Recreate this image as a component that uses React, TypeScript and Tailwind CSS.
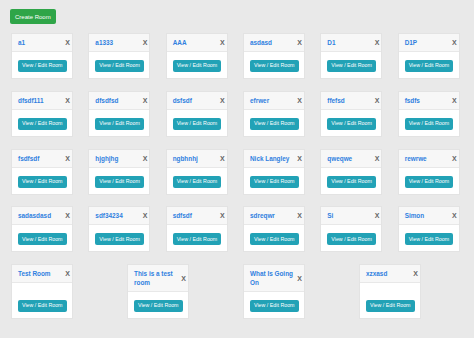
const rooms = [
  "a1", "a1333", "AAA", "asdasd", "D1", "D1P",
  "dfsdf111", "dfsdfsd", "dsfsdf", "efrwer", "ffefsd", "fsdfs",
  "fsdfsdf", "hjghjhg", "ngbhnhj", "Nick Langley", "qweqwe", "rewrwe",
  "sadasdasd", "sdf34234", "sdfsdf", "sdreqwr", "Si", "Simon",
  "Test Room", "This is a test room", "What Is Going On", "xzxasd",
];

function RoomCard({ name }: { name: string }) {
  return (
    <div className="ml-[8px] flex w-[62px] flex-col border border-[#e3e3e3] bg-white">
      <div className="flex items-center justify-between border-b border-[#e8e8e8] bg-[#f7f7f7] py-[4px] pl-[6px] pr-[2px]">
        <span className="text-[6.4px] font-bold leading-[9px] text-[#2f7fe0]">{name}</span>
        <span className="text-[7px] font-bold leading-[9px] text-[#666]">X</span>
      </div>
      <div className="flex flex-1 items-end px-[6px] pt-[8px] pb-[6px]">
        <button className="flex h-[12px] items-center whitespace-nowrap rounded-[2px] bg-[#22a2b6] px-[4px] text-[5.3px] leading-none text-white">
          View / Edit Room
        </button>
      </div>
    </div>
  );
}

export default function App() {
  return (
    <div className="min-h-screen bg-[#e9e9e9] pt-[9px] font-['Liberation_Sans',Arial,sans-serif]">
      <div className="flex pl-[10px]">
        <button className="flex h-[15px] items-center whitespace-nowrap rounded-[2px] bg-[#2fa548] px-[5px] text-[6px] leading-none text-white">
          Create Room
        </button>
      </div>
      <div className="mt-[9px] flex flex-wrap pl-[3px] pr-[7px]">
        {rooms.map((r) => (
          <div key={r} className="flex grow basis-[72px] pb-[11.75px]">
            <RoomCard name={r} />
          </div>
        ))}
      </div>
    </div>
  );
}
